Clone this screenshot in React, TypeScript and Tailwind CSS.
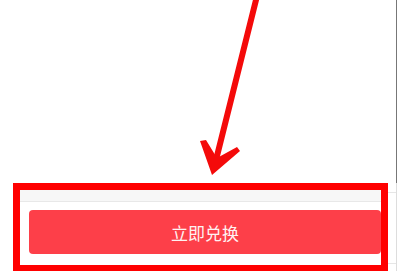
export default function App() {
  return (
    <div className="w-[397px] h-[271px] overflow-hidden bg-white font-['Noto_Sans_CJK_SC','Noto_Sans',sans-serif]">
      {/* upper page with the hint arrow */}
      <div className="relative h-[183px] w-[397px] border-r border-[#777] bg-white">
        <svg className="absolute inset-0" width="397" height="183" viewBox="0 0 397 183">
          <line x1="257" y1="-4" x2="216" y2="160" stroke="#f40a0a" strokeWidth="6" strokeLinecap="round" />
          <polygon points="212,175 200,141 206,140 217,158 237,147 240,151" fill="#f40a0a" />
        </svg>
      </div>

      <div className="flex w-[397px]">
        <div className="ml-[13px] h-[89px] w-[375px] border-[7px] border-[#f00] bg-white">
          <div className="h-[12px] border-b border-[#e8e8e8] bg-[#f7f7f7]" />
          <div className="pl-[9px] pt-[8px]">
            <button className="flex h-[44px] w-full items-center justify-center rounded-[4px] bg-[#fd3f49] text-[17px] leading-none text-[#fff2f2]">
              立即兑换
            </button>
          </div>
        </div>
        <div className="flex h-[89px] flex-1 flex-col border-r border-[#ddd]">
          <div className="mt-[9px] h-px bg-[#e6e6e6]" />
          <div className="mt-[70px] h-px bg-[#e6e6e6]" />
        </div>
      </div>
    </div>
  )
}
